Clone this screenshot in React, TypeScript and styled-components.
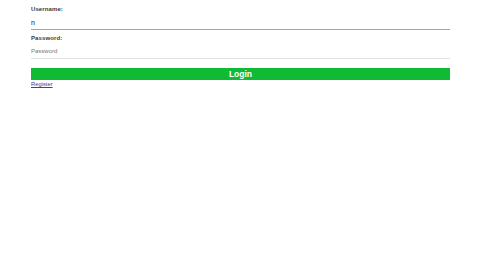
import styled, { createGlobalStyle } from "styled-components";

const GlobalStyle = createGlobalStyle`
  html, body {
    margin: 0;
    padding: 0;
    background: #fff;
  }
  body {
    font-family: "Liberation Sans", Arial, sans-serif;
  }
`;

const Form = styled.form`
  display: flex;
  flex-direction: column;
  padding: 5px 30px 0 31px;
`;

const Label = styled.label`
  font-size: 6px;
  font-weight: 700;
  line-height: 9px;
  letter-spacing: 0.1px;
  color: #3a3a3a;
`;

const Input = styled.input<{ $active?: boolean }>`
  height: 16px;
  box-sizing: border-box;
  padding: ${(p) => (p.$active ? "2px 0 0" : "0")};
  margin: 0 0 4px;
  border: none;
  border-bottom: 1px solid ${(p) => (p.$active ? "#9ca3be" : "#e2e2e2")};
  font-family: inherit;
  font-size: 7px;
  color: #111;
  caret-color: #000;
  outline: none;
  background: transparent;

  &::placeholder {
    color: #777;
    font-size: 6px;
  }
`;

const Button = styled.button`
  margin-top: 5px;
  height: 12px;
  padding: 0;
  border: none;
  background: #0fbb35;
  color: #fff;
  font-family: inherit;
  font-size: 8.5px;
  font-weight: 700;
  line-height: 12px;
  cursor: pointer;
`;

const RegisterLink = styled.a`
  align-self: flex-start;
  font-size: 5.8px;
  line-height: 9px;
  color: #56368f;
  text-decoration: underline;
`;

export default function App() {
  return (
    <>
      <GlobalStyle />
      <Form onSubmit={(e) => e.preventDefault()}>
        <Label htmlFor="username">Username:</Label>
        <Input id="username" $active defaultValue="n" autoFocus />
        <Label htmlFor="password">Password:</Label>
        <Input id="password" type="password" placeholder="Password" />
        <Button type="submit">Login</Button>
        <RegisterLink href="#register">Register</RegisterLink>
      </Form>
    </>
  );
}
